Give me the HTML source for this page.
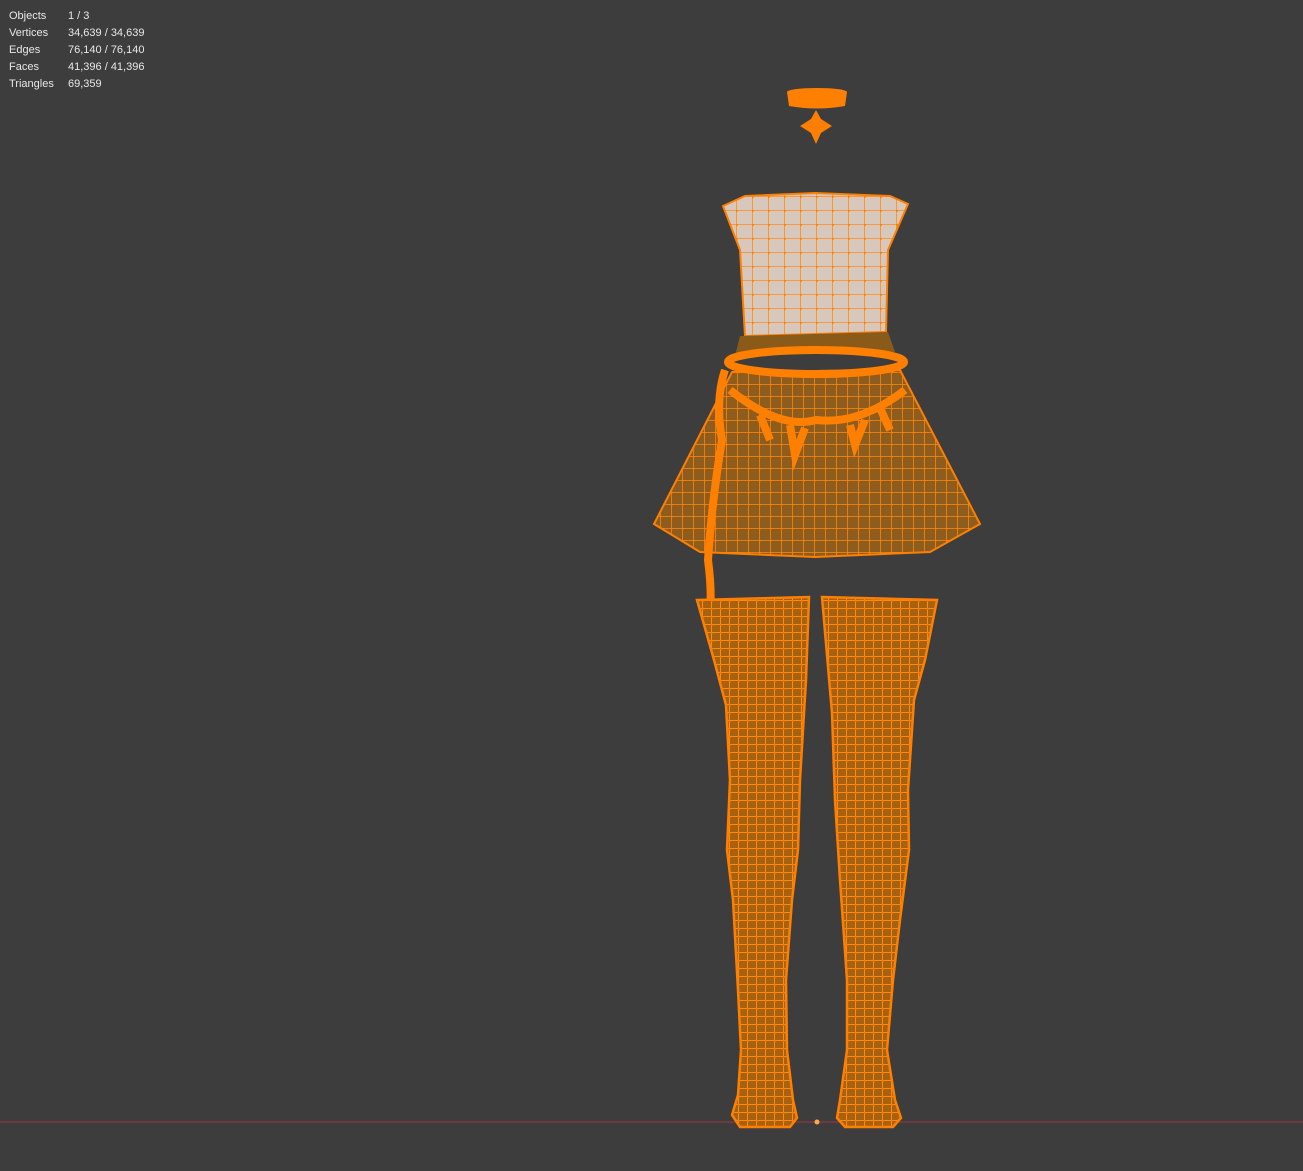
<!DOCTYPE html>
<html><head><style>
body{margin:0;width:1303px;height:1171px;background:#3d3d3d;overflow:hidden;position:relative;font-family:"Liberation Sans","DejaVu Sans",sans-serif}
.st{position:absolute;left:9px;top:8px;color:#e8e8e8;font-size:11px;line-height:17px}
.st div{display:flex}.st span:first-child{width:59px}
svg{position:absolute;left:0;top:0}
</style></head><body>
<div class="st">
<div><span>Objects</span><span>1 / 3</span></div>
<div><span>Vertices</span><span>34,639 / 34,639</span></div>
<div><span>Edges</span><span>76,140 / 76,140</span></div>
<div><span>Faces</span><span>41,396 / 41,396</span></div>
<div><span>Triangles</span><span>69,359</span></div>
</div>
<svg width="1303" height="1171" viewBox="0 0 1303 1171">
<defs>
<pattern id="g1" width="16" height="14" patternUnits="userSpaceOnUse"><path d="M0 0H16M0 0V14" stroke="#ff8a1a" stroke-width="1.6" fill="none"/><circle cx="0" cy="0" r="2.2" fill="#ff7f00"/></pattern>
<pattern id="g2" width="11" height="12" patternUnits="userSpaceOnUse"><path d="M0 0H11M0 0V12" stroke="#ff8a10" stroke-width="1.5" fill="none"/><circle cx="0" cy="0" r="1.8" fill="#ff7f00"/></pattern>
<pattern id="g3" width="9" height="8" patternUnits="userSpaceOnUse"><path d="M0 0H9M0 0V8" stroke="#ff8a10" stroke-width="2" fill="none"/><circle cx="0" cy="0" r="2" fill="#ff7f00"/></pattern>
</defs>
<line x1="0" y1="1122" x2="1303" y2="1122" stroke="#8a3a44" stroke-width="1.2"/>
<!-- choker -->
<ellipse cx="817" cy="92" rx="30" ry="4" fill="#ff7f00"/>
<path d="M787 92 L847 92 L845 106 Q817 111 789 106Z" fill="#ff7f00"/>
<path d="M816 110 L821 119 L832 126 L821 133 L816 144 L811 133 L800 126 L811 119Z" fill="#ff7f00"/>
<!-- top -->
<path d="M723 206 L745 196 L815 193 L890 196 L908 204 L888 250 L886 332 L745 336 L740 250Z" fill="#d8c8bc"/>
<path d="M723 206 L745 196 L815 193 L890 196 L908 204 L888 250 L886 332 L745 336 L740 250Z" fill="url(#g1)" stroke="#ff7f00" stroke-width="2"/>
<path d="M740 336 L888 332 L895 352 L735 356Z" fill="#8a5a18"/>
<!-- skirt -->
<path d="M732 372 L900 370 L980 524 L930 552 L815 557 L700 552 L654 524Z" fill="#8e5c1c"/>
<path d="M732 372 L900 370 L980 524 L930 552 L815 557 L700 552 L654 524Z" fill="url(#g2)" stroke="#ff7f00" stroke-width="2"/>
<ellipse cx="816" cy="362" rx="88" ry="12" fill="none" stroke="#ff7f00" stroke-width="8"/>
<path d="M730 390 Q780 430 816 420 Q860 425 905 390" fill="none" stroke="#ff7f00" stroke-width="8"/>
<path d="M790 425 L795 455 L805 428M850 425 L855 445 L865 420M760 415 L770 440M880 408 L890 430" stroke="#ff7f00" stroke-width="8" fill="none"/>
<path d="M725 370 Q715 400 722 440 Q712 500 708 560 Q712 590 710 612" fill="none" stroke="#ff7f00" stroke-width="8"/>
<!-- legs -->
<path d="M697 600 L809 597 L806 680 L800 780 L798 850 L792 900 L786 980 L787 1050 L793 1100 L797 1118 L790 1127 L740 1127 L732 1115 L738 1095 L741 1050 L738 990 L733 900 L727 850 L730 780 L726 705 L714 660Z" fill="#a8620f"/>
<path d="M697 600 L809 597 L806 680 L800 780 L798 850 L792 900 L786 980 L787 1050 L793 1100 L797 1118 L790 1127 L740 1127 L732 1115 L738 1095 L741 1050 L738 990 L733 900 L727 850 L730 780 L726 705 L714 660Z" fill="url(#g3)" stroke="#ff7f00" stroke-width="2.5"/>
<path d="M822 597 L937 600 L925 660 L914 700 L908 790 L909 850 L900 920 L893 980 L887 1050 L895 1100 L901 1118 L893 1127 L845 1127 L837 1118 L840 1100 L847 1050 L847 980 L840 880 L835 800 L832 713Z" fill="#a8620f"/>
<path d="M822 597 L937 600 L925 660 L914 700 L908 790 L909 850 L900 920 L893 980 L887 1050 L895 1100 L901 1118 L893 1127 L845 1127 L837 1118 L840 1100 L847 1050 L847 980 L840 880 L835 800 L832 713Z" fill="url(#g3)" stroke="#ff7f00" stroke-width="2.5"/>
<circle cx="817" cy="1122" r="2.5" fill="#ffaa40"/>
</svg>
</body></html>
